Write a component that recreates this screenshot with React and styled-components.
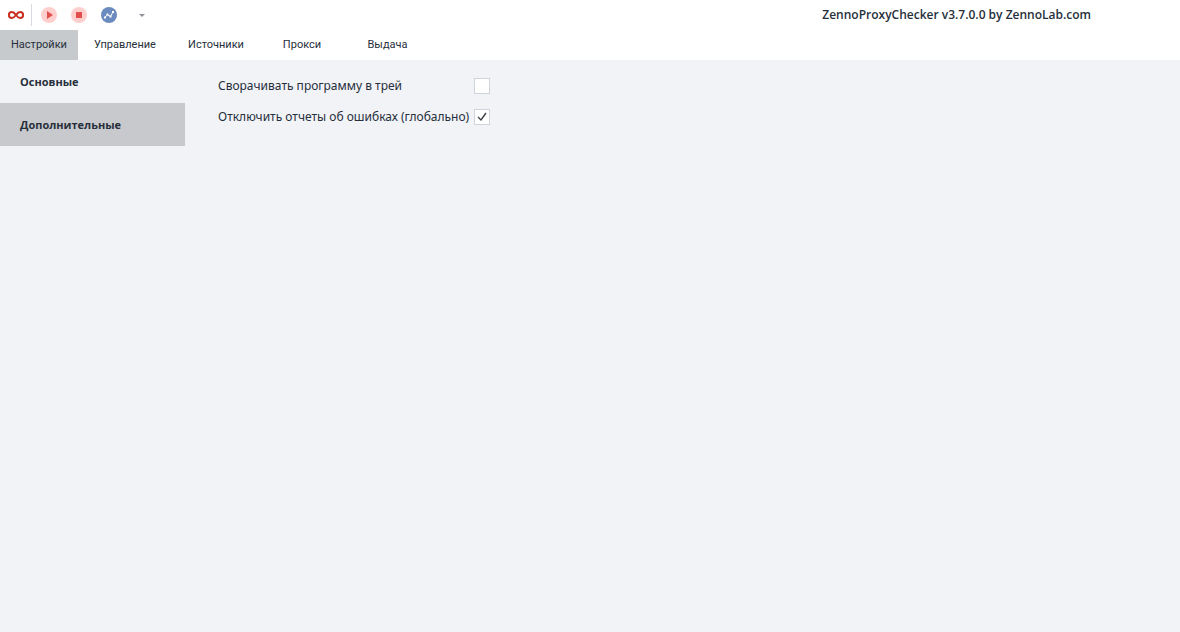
import React, { useState } from 'react';
import styled, { createGlobalStyle } from 'styled-components';

const TABS = [
  { title: 'Настройки', width: 78 },
  { title: 'Управление', width: 94 },
  { title: 'Источники', width: 88 },
  { title: 'Прокси', width: 84 },
  { title: 'Выдача', width: 87 },
];

const SECTIONS = ['Основные', 'Дополнительные'];

function App() {
  const [tab, setTab] = useState('Настройки');
  const [section, setSection] = useState('Дополнительные');

  return (
    <Window>
      <GlobalStyle />
      <TitleBar>
        <Logo>
          <svg width="18" height="10" viewBox="0 0 18 10" fill="none" stroke="#c8301f">
            <path
              d="M9 5C7.6 3 6.5 2 4.9 2a3 3 0 0 0 0 6C6.5 8 7.6 7 9 5s2.5-3 4.1-3a3 3 0 0 1 0 6C11.5 8 10.4 7 9 5z"
              strokeWidth="2"
            />
          </svg>
        </Logo>
        <Tools>
          <ToolButton aria-label="Старт">
            <svg width="16" height="16" viewBox="0 0 16 16">
              <circle cx="8" cy="8" r="8" fill="#ffcfcd" />
              <path d="M6 4l6 4-6 4z" fill="#e2504e" />
            </svg>
          </ToolButton>
          <ToolButton aria-label="Стоп">
            <svg width="16" height="16" viewBox="0 0 16 16">
              <circle cx="8" cy="8" r="8" fill="#ffcfcd" />
              <path d="M5 5h6v6H5z" fill="#e2504e" />
            </svg>
          </ToolButton>
          <ToolButton aria-label="Статистика">
            <svg width="16" height="16" viewBox="0 0 16 16">
              <circle cx="8" cy="8" r="8" fill="#6b8abf" />
              <path d="M4 10.5l2.5-3 3 2L12 5" fill="none" stroke="#fff" />
              <path d="M3 9.5h2v2H3zM5.5 6.5h2v2h-2zM8.5 8.5h2v2h-2zM11 4h2v2h-2z" fill="#fff" />
            </svg>
          </ToolButton>
        </Tools>
        <MenuButton aria-label="Меню">
          <svg width="6" height="3" viewBox="0 0 6 3">
            <path d="M0 0h6L3 3z" fill="#8d9197" />
          </svg>
        </MenuButton>
        <Title>ZennoProxyChecker v3.7.0.0 by ZennoLab.com</Title>
      </TitleBar>
      <TabBar>
        {TABS.map(({ title, width }) => (
          <Tab key={title} $width={width} $active={tab === title} onClick={() => setTab(title)}>
            {title}
          </Tab>
        ))}
      </TabBar>
      <Body>
        <SideMenu>
          {SECTIONS.map((name) => (
            <SideItem key={name} $active={section === name} onClick={() => setSection(name)}>
              {name}
            </SideItem>
          ))}
        </SideMenu>
        <Options>
          <Option>
            Сворачивать программу в трей
            <CheckBox type="checkbox" />
          </Option>
          <Option>
            Отключить отчеты об ошибках (глобально)
            <CheckBox type="checkbox" defaultChecked />
          </Option>
        </Options>
      </Body>
    </Window>
  );
}

// The tick box with its mark drawn over it
function CheckBox(props) {
  return (
    <BoxWrap>
      <Box {...props} />
      <Mark width="16" height="16" viewBox="0 0 16 16">
        <path d="M4 8l3 3 5-7" fill="none" stroke="#3b4046" strokeWidth="1.4" />
      </Mark>
    </BoxWrap>
  );
}

export default App;

const GlobalStyle = createGlobalStyle`
  * {
    box-sizing: border-box;
  }

  body {
    margin: 0;
    background-color: #f1f3f7;
    color: #272f3b;
    font-family: 'Open Sans', 'Noto Sans', sans-serif;
  }

  button {
    padding: 0;
    border: none;
    background: none;
    color: inherit;
    font-family: inherit;
  }
`;

const Window = styled.div`
  display: flex;
  flex-direction: column;
  min-height: 100vh;
`;

const TitleBar = styled.header`
  display: flex;
  align-items: center;
  height: 30px;
  padding-right: 89px;
  background-color: #fff;
`;

const Logo = styled.div`
  display: flex;
  align-items: center;
  justify-content: flex-end;
  width: 32px;
  height: 22px;
  padding-right: 6px;
  border-right: 1px solid #d9dae3;
`;

const Tools = styled.div`
  display: flex;
  gap: 14px;
  padding-left: 9px;
`;

const ToolButton = styled.button`
  display: flex;
  width: 16px;
  height: 16px;
`;

const MenuButton = styled.button`
  display: flex;
  align-items: center;
  justify-content: center;
  width: 16px;
  height: 16px;
  margin-left: 17px;
`;

const Title = styled.h1`
  margin: 0 0 0 auto;
  font-size: 12px;
  font-weight: 600;
  line-height: 16px;
`;

const TabBar = styled.nav`
  display: flex;
  height: 30px;
  background-color: #fff;
`;

const Tab = styled.button`
  width: ${({ $width }) => $width}px;
  font-family: Roboto, 'Noto Sans', sans-serif;
  font-size: 11px;
  line-height: 16px;
  ${({ $active }) => $active && 'background-color: #c6cacd;'}
`;

const Body = styled.main`
  display: flex;
  flex: 1;
`;

const SideMenu = styled.aside`
  display: flex;
  flex-direction: column;
  width: 185px;
`;

const SideItem = styled.button`
  height: 43px;
  padding-left: 20px;
  font-size: 11px;
  font-weight: 700;
  line-height: 16px;
  text-align: left;
  ${({ $active }) => $active && 'background-color: #c8c9cd;'}
`;

const Options = styled.div`
  display: flex;
  flex: 1;
  flex-direction: column;
  gap: 15px;
  padding: 18px 33px;
`;

const Option = styled.label`
  display: flex;
  align-items: center;
  justify-content: space-between;
  width: 272px;
  font-family: 'Noto Sans', sans-serif;
  font-size: 12px;
  line-height: 16px;
  white-space: nowrap;
`;

const BoxWrap = styled.span`
  position: relative;
  display: flex;
`;

const Mark = styled.svg`
  position: absolute;
  inset: 0;
  visibility: hidden;
  pointer-events: none;
`;

const Box = styled.input`
  width: 16px;
  height: 16px;
  margin: 0;
  border: 1px solid #d0d2dc;
  background-color: #fff;
  appearance: none;

  &:checked + ${Mark} {
    visibility: visible;
  }
`;
